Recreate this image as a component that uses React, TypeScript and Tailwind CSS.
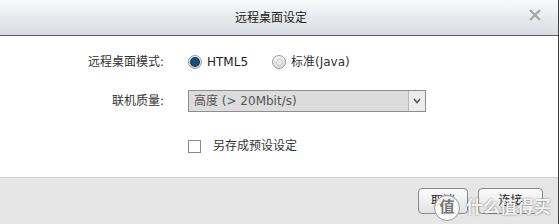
import React from "react";

const font = { fontFamily: '"DejaVu Sans", "Noto Sans CJK SC", sans-serif' };

function Radio({ checked }: { checked: boolean }) {
  return (
    <span className="flex h-[14px] w-[14px] items-center justify-center rounded-full border border-[#9a9a9a] bg-gradient-to-b from-[#f4f4f4] to-[#dcdcdc]">
      {checked ? (
        <span className="h-[8px] w-[8px] rounded-full bg-[#1b4f7c] shadow-[0_0_0_1px_#0f3556]" />
      ) : (
        <span className="h-[7px] w-[7px] rounded-full border border-[#c8c8c8] bg-[#ececec]" />
      )}
    </span>
  );
}

export default function App() {
  return (
    <div
      className="relative flex h-[224px] w-[559px] flex-col overflow-hidden border-r border-[#3a3a3a] bg-white text-[12px] text-[#333]"
      style={font}
    >
      {/* Title bar */}
      <div className="relative flex h-[36px] shrink-0 items-center justify-center border-b border-[#5c5c5c] bg-gradient-to-b from-[#f8f9fa] to-[#d8dce2]">
        <span className="pr-[16px] text-[12px] text-[#222]">远程桌面设定</span>
        <svg
          className="absolute right-[16px] top-[8px]"
          width="14"
          height="14"
          viewBox="0 0 14 14"
        >
          <path d="M2 2 L12 12 M12 2 L2 12" stroke="#a9a9a9" strokeWidth="2.4" />
        </svg>
      </div>

      {/* Body */}
      <div className="flex flex-1 flex-col pt-[15px]">
        <div className="grid grid-cols-[164px_1fr] items-center gap-x-[24px]">
          <div className="flex h-[22px] items-center justify-end">远程桌面模式:</div>
          <div className="flex h-[22px] items-center">
            <Radio checked />
            <span className="ml-[5px] text-[#222]">HTML5</span>
            <span className="ml-[24px]">
              <Radio checked={false} />
            </span>
            <span className="ml-[5px] text-[#333]">标准(Java)</span>
          </div>

          <div className="mt-[17px] flex h-[22px] items-center justify-end">联机质量:</div>
          <div className="mt-[17px] flex h-[22px] w-[238px] items-stretch border border-[#8e8e8e] bg-[#dcdcdc]">
            <span className="flex flex-1 items-center pl-[5px] text-[#555]">高度 (&gt; 20Mbit/s)</span>
            <span className="flex w-[17px] items-center justify-center border-l border-[#b8b8b8] bg-[#ececec]">
              <svg width="8" height="6" viewBox="0 0 8 6">
                <path d="M1 1 L4 4.5 L7 1" fill="none" stroke="#555" strokeWidth="1.6" />
              </svg>
            </span>
          </div>

          <div className="mt-[23px] h-[22px]" />
          <div className="mt-[23px] flex h-[22px] items-center">
            <span className="h-[13px] w-[13px] border border-[#8a8a8a] bg-white" />
            <span className="ml-[12px]">另存成预设设定</span>
          </div>
        </div>
      </div>

      {/* Footer */}
      <div className="flex h-[47px] shrink-0 items-start justify-end gap-[10px] border-t border-[#d2d2d2] bg-[#e6e6e6] pr-[15px] pt-[10px]">
        <button className="h-[26px] w-[50px] rounded-[4px] border border-[#8a8a8a] bg-gradient-to-b from-[#fbfbfb] to-[#e2e2e2] text-[12px] text-[#222]">
          取消
        </button>
        <button className="h-[26px] w-[65px] rounded-[4px] border border-[#8a8a8a] bg-gradient-to-b from-[#fbfbfb] to-[#e2e2e2] text-[12px] text-[#222]">
          连接
        </button>
      </div>

      {/* Watermark overlay */}
      <div className="pointer-events-none absolute left-[434px] top-[194px] flex h-[27px] items-center gap-[6px] whitespace-nowrap leading-none">
        <span className="flex h-[26px] w-[26px] shrink-0 items-center justify-center rounded-full border border-[#9a9a9a] bg-white/85 text-[15px] font-bold leading-none text-[#777]">
          值
        </span>
        <span className="text-[17px] font-bold leading-none text-white/90 [text-shadow:0_0_2px_rgba(0,0,0,0.55)]">
          什么值得买
        </span>
      </div>
    </div>
  );
}
